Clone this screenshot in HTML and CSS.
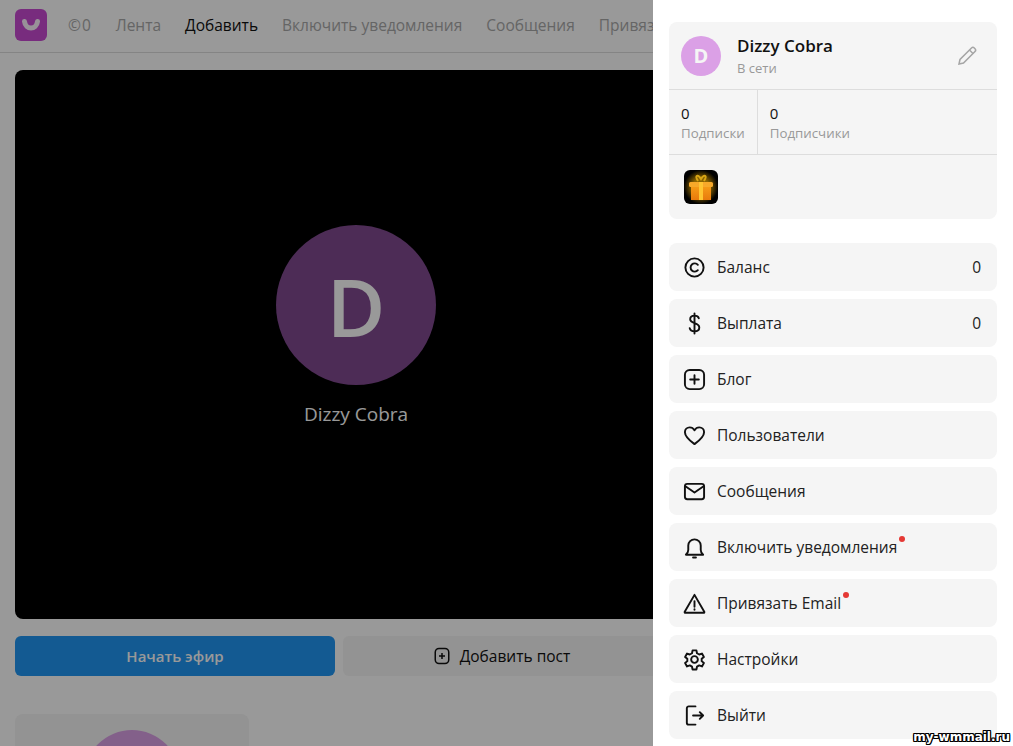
FILE: index.html
```html
<!DOCTYPE html>
<html lang="ru">
<head>
    <meta charset="UTF-8">
    <title>Добавить</title>
    <link rel="stylesheet" href="styles.css">
</head>
<body>
    <div class="page">
        <header class="top-bar">
            <div class="logo">
                <svg width="18" height="12" viewBox="0 0 18 12"><path d="M2.500 2.500C3 7 6 9 9 9s6-2 6.500-6.500" fill="none" stroke="#fdf2fd" stroke-width="5" stroke-linecap="round"/></svg>
            </div>
            <a class="nav-link nav-balance">©0</a>
            <a class="nav-link">Лента</a>
            <a class="nav-link active">Добавить</a>
            <a class="nav-link">Включить уведомления</a>
            <a class="nav-link">Сообщения</a>
            <a class="nav-link">Привязать Email</a>
        </header>
        <main class="content">
            <div class="stream-box">
                <div class="stream-avatar">D</div>
                <div class="stream-name">Dizzy Cobra</div>
            </div>
            <div class="stream-actions">
                <button class="btn btn-primary">Начать эфир</button>
                <button class="btn btn-light">
                    <svg class="icon-small" viewBox="0 0 24 24"><rect x="3" y="2" width="18" height="20" rx="5"/><path d="M12 8v8M8 12h8"/></svg>
                    Добавить пост
                </button>
            </div>
            <div class="user-card">
                <div class="user-card-avatar"></div>
            </div>
        </main>
    </div>

    <div class="overlay"></div>

    <aside class="side-panel">
        <section class="profile-card">
            <div class="profile-head">
                <div class="profile-avatar">D</div>
                <div class="profile-info">
                    <div class="profile-name">Dizzy Cobra</div>
                    <div class="profile-status">В сети</div>
                </div>
                <svg class="edit-icon" viewBox="0 0 24 24"><path d="M4 20l1-4.500L16.500 4a2 2 0 0 1 2.800 0l.7.7a2 2 0 0 1 0 2.800L8.500 19z"/><path d="M14.500 6l3.500 3.500"/></svg>
            </div>
            <div class="profile-stats">
                <div class="stat stat-first">
                    <div class="stat-value">0</div>
                    <div class="stat-label">Подписки</div>
                </div>
                <div class="stat">
                    <div class="stat-value">0</div>
                    <div class="stat-label">Подписчики</div>
                </div>
            </div>
            <div class="profile-gifts">
                <div class="gift">
                    <svg width="34" height="34" viewBox="0 0 34 34">
                        <defs>
                            <radialGradient id="glow">
                                <stop offset="0.500" stop-color="#8a6400"/>
                                <stop offset="1" stop-color="#000"/>
                            </radialGradient>
                            <linearGradient id="box" x1="0" y1="0" x2="0" y2="1">
                                <stop offset="0" stop-color="#f59a16"/>
                                <stop offset="1" stop-color="#e87a0c"/>
                            </linearGradient>
                        </defs>
                        <circle cx="17" cy="17" r="17" fill="url(#glow)"/>
                        <path d="M14 11C10 5 14 4 17 9c3-5 7-4 3 2" fill="none" stroke="#d8a514" stroke-width="2"/>
                        <rect x="5" y="12" width="24" height="5" rx="1.500" fill="#f7a92a"/>
                        <rect x="7" y="17" width="20" height="13" fill="url(#box)"/>
                        <rect x="15" y="12" width="4" height="18" fill="#ffc531"/>
                    </svg>
                </div>
            </div>
        </section>

        <nav class="menu">
            <a class="menu-item">
                <svg class="menu-icon" viewBox="0 0 24 24"><circle cx="12" cy="12" r="9.500"/><path d="M15.500 9.200a4.300 4.300 0 1 0 0 5.600"/></svg>
                <span>Баланс</span><span class="menu-value">0</span>
            </a>
            <a class="menu-item">
                <svg class="menu-icon" viewBox="0 0 24 24"><path d="M12 1.500v21M16.500 6.500c-.5-1.800-2.200-2.700-4.500-2.700-2.600 0-4.500 1.500-4.500 3.800 0 5 9.500 3 9.500 8.500 0 2.400-2.100 4-5 4-2.600 0-4.600-1.200-5-3.300"/></svg>
                <span>Выплата</span><span class="menu-value">0</span>
            </a>
            <a class="menu-item">
                <svg class="menu-icon" viewBox="0 0 24 24"><rect x="2" y="2" width="20" height="20" rx="5"/><path d="M12 7.500v9M7.500 12h9"/></svg>
                <span>Блог</span>
            </a>
            <a class="menu-item">
                <svg class="menu-icon" viewBox="0 0 24 24"><path d="M12 21C6 16.500 2 13 2 8.500 2 5.500 4.300 3.500 7 3.500c2 0 3.800 1 5 3 1.200-2 3-3 5-3 2.700 0 5 2 5 5 0 4.500-4 8-10 12.500z"/></svg>
                <span>Пользователи</span>
            </a>
            <a class="menu-item">
                <svg class="menu-icon" viewBox="0 0 24 24"><rect x="2" y="4" width="20" height="16" rx="2.500"/><path d="M2.500 6.500L12 13l9.500-6.500"/></svg>
                <span>Сообщения</span>
            </a>
            <a class="menu-item">
                <svg class="menu-icon" viewBox="0 0 24 24"><path d="M3 19.500h18c-1.500-1.500-2.500-2.500-2.500-5v-4.500a6.500 6.500 0 0 0-13 0v4.500c0 2.500-1 3.500-2.500 5z"/><path d="M10.500 22.500h3"/></svg>
                <span class="has-dot">Включить уведомления</span>
            </a>
            <a class="menu-item">
                <svg class="menu-icon" viewBox="0 0 24 24"><path d="M12 3L1.800 20.500c-.3.600 0 1.200.7 1.200h19c.7 0 1-.6.700-1.200z"/><path d="M12 9.500v6M12 18v.5"/></svg>
                <span class="has-dot">Привязать Email</span>
            </a>
            <a class="menu-item">
                <svg class="menu-icon" viewBox="0 0 24 24"><circle cx="12" cy="12" r="3.500"/><path d="M10 2.500h4l.6 3 2.300 1.300 2.900-1 2 3.500-2.300 2v2.400l2.300 2-2 3.500-2.900-1-2.300 1.300-.6 3h-4l-.6-3-2.300-1.300-2.900 1-2-3.500 2.300-2v-2.400l-2.300-2 2-3.500 2.900 1 2.300-1.300z"/></svg>
                <span>Настройки</span>
            </a>
            <a class="menu-item">
                <svg class="menu-icon" viewBox="0 0 24 24"><path d="M13 2.500H6a2 2 0 0 0-2 2v15a2 2 0 0 0 2 2h7M10.500 12H21M17.500 8.500L21 12l-3.500 3.500"/></svg>
                <span>Выйти</span>
            </a>
        </nav>
    </aside>

    <div class="watermark">my-wmmail.ru</div>
</body>
</html>
```

FILE: styles.css
```css
* {
    box-sizing: border-box;
}

html,
body {
    height: 100%;
}

body {
    margin: 0;
    overflow: hidden;
    position: relative;
    background-color: #fff;
    color: #111;
    font-family: "Open Sans", "Noto Sans", sans-serif;
    font-size: 15.5px;
}

/* page under the overlay */
.page {
    width: 712px;
    height: 100%;
    overflow: hidden;
}

.top-bar {
    display: flex;
    align-items: center;
    gap: 24px;
    height: 53px;
    padding: 0 15px 2px;
    border-bottom: 1px solid #ddd;
    white-space: nowrap;
    overflow: hidden;
}

.logo {
    width: 32px;
    height: 32px;
    flex: none;
    display: flex;
    align-items: center;
    justify-content: center;
    margin-right: -3px;
    border-radius: 6px;
    background-color: #c84ad2;
}

.nav-link {
    color: #a9a9a9;
}

.nav-balance {
    letter-spacing: 1px;
}

.nav-link.active {
    color: #111;
}

.content {
    padding: 17px 15px 0;
}

.stream-box {
    width: 682px;
    height: 549px;
    display: flex;
    flex-direction: column;
    align-items: center;
    padding-top: 155px;
    border-radius: 8px;
    background-color: #000;
}

.stream-avatar {
    width: 160px;
    height: 160px;
    flex: none;
    border-radius: 50%;
    display: flex;
    align-items: center;
    justify-content: center;
    background-color: #804a90;
    color: #fff;
    font-size: 80px;
    font-weight: 600;
}

.stream-name {
    margin-top: 16px;
    color: #fff;
    font-size: 19px;
}

.stream-actions {
    display: flex;
    gap: 8px;
    margin-top: 17px;
}

.btn {
    width: 320px;
    height: 40px;
    display: flex;
    align-items: center;
    justify-content: center;
    gap: 9px;
    flex: none;
    border: none;
    border-radius: 6px;
    font-family: inherit;
    font-size: 15.5px;
}

.btn-primary {
    background-color: #2196f3;
    color: #fff;
    font-size: 15px;
    font-weight: 600;
}

.btn-light {
    padding-right: 9px;
    background-color: #f5f5f5;
    color: #111;
}

.icon-small {
    width: 18px;
    height: 18px;
    fill: none;
    stroke: #111;
    stroke-width: 2;
}

.user-card {
    width: 234px;
    height: 100px;
    margin-top: 38px;
    padding-top: 16px;
    border-radius: 8px;
    background-color: #f5f5f5;
}

.user-card-avatar {
    width: 96px;
    height: 96px;
    margin: 0 auto;
    border-radius: 50%;
    background-color: #dba0e6;
}

.overlay {
    position: absolute;
    inset: 0;
    background-color: rgba(0, 0, 0, 0.4);
}

/* right drawer */
.side-panel {
    position: absolute;
    top: 0;
    right: 0;
    bottom: 0;
    width: 360px;
    padding: 22px 16px 0;
    overflow: hidden;
    background-color: #fff;
}

.profile-card {
    border-radius: 8px;
    background-color: #f5f5f5;
}

.profile-head {
    display: flex;
    align-items: center;
    height: 68px;
    padding: 0 18px 0 12px;
    border-bottom: 1px solid #ddd;
}

.profile-avatar {
    width: 40px;
    height: 40px;
    flex: none;
    display: flex;
    align-items: center;
    justify-content: center;
    border-radius: 50%;
    background-color: #dba0e6;
    color: #f5f5f5;
    font-size: 20px;
    font-weight: 700;
}

.profile-info {
    flex: 1;
    margin-left: 16px;
}

.profile-name {
    font-size: 17px;
    font-weight: 600;
    line-height: 22px;
}

.profile-status {
    margin-top: 2px;
    color: #999;
    font-size: 13px;
    line-height: 18px;
}

.edit-icon {
    width: 24px;
    height: 24px;
    fill: none;
    stroke: #a5a5a5;
    stroke-width: 1.500;
}

.profile-stats {
    display: flex;
    height: 65px;
    border-bottom: 1px solid #ddd;
}

.stat {
    padding: 14px 12px 0;
}

.stat-first {
    border-right: 1px solid #ddd;
}

.stat-value {
    font-size: 15px;
    line-height: 18px;
}

.stat-label {
    color: #999;
    font-size: 13.3px;
    line-height: 22px;
}

.profile-gifts {
    height: 64px;
    padding: 15px;
}

.gift {
    width: 34px;
    height: 34px;
    overflow: hidden;
    border-radius: 6px;
    background-color: #000;
}

.gift svg {
    display: block;
}

.menu {
    display: flex;
    flex-direction: column;
    gap: 8px;
    margin-top: 24px;
}

.menu-item {
    display: flex;
    align-items: center;
    flex: none;
    height: 48px;
    padding: 0 16px 0 14px;
    border-radius: 8px;
    background-color: #f5f5f5;
    color: #222;
}

.menu-icon {
    width: 23px;
    height: 23px;
    flex: none;
    margin-right: 11px;
    fill: none;
    stroke: #111;
    stroke-width: 2;
    stroke-linecap: round;
    stroke-linejoin: round;
}

.menu-value {
    margin-left: auto;
}

.has-dot {
    position: relative;
}

.has-dot::after {
    content: "";
    position: absolute;
    top: 0;
    right: -8px;
    width: 6px;
    height: 6px;
    border-radius: 50%;
    background-color: #e53935;
}

.watermark {
    position: absolute;
    right: 3px;
    bottom: 2px;
    color: #fff;
    font-family: "DejaVu Sans", sans-serif;
    font-size: 12px;
    font-weight: 700;
    text-shadow: 1px 0 #000, -1px 0 #000, 0 1px #000, 0 -1px #000, 1px 1px #000, -1px -1px #000, 1px -1px #000, -1px 1px #000;
}
```
